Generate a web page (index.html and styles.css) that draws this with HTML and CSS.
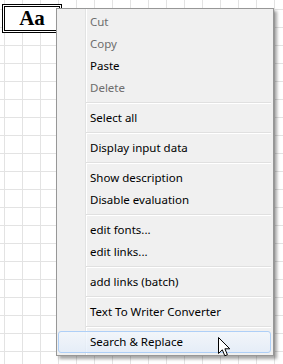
FILE: index.html
```html
<!DOCTYPE html>
<html lang="en">
<head>
    <meta charset="UTF-8">
    <meta name="viewport" content="width=device-width, initial-scale=1.0">
    <title>Context Menu</title>
    <link rel="stylesheet" href="styles.css">
</head>
<body>
    <div class="canvas">
        <div class="text-node">Aa</div>

        <ul class="menu">
            <li class="item disabled">Cut</li>
            <li class="item disabled">Copy</li>
            <li class="item">Paste</li>
            <li class="item disabled">Delete</li>
            <li class="sep"></li>
            <li class="item">Select all</li>
            <li class="sep"></li>
            <li class="item">Display input data</li>
            <li class="sep"></li>
            <li class="item">Show description</li>
            <li class="item">Disable evaluation</li>
            <li class="sep"></li>
            <li class="item">edit fonts...</li>
            <li class="item">edit links...</li>
            <li class="sep"></li>
            <li class="item">add links (batch)</li>
            <li class="sep"></li>
            <li class="item">Text To Writer Converter</li>
            <li class="sep"></li>
            <li class="item active">Search &amp; Replace</li>
        </ul>

        <svg class="cursor" width="13" height="21" viewBox="0 0 13 21">
            <path d="M0.5 0.5 L0.5 16.5 L4.3 12.8 L6.8 18.8 L9.4 17.7 L6.9 11.8 L11.8 11.8 Z" fill="#fff" stroke="#000" stroke-width="1" stroke-linejoin="miter"/>
        </svg>
    </div>
</body>
</html>
```

FILE: styles.css
```css
html, body {
    margin: 0;
    padding: 0;
}
body {
    background-color: #fff;
    background-image:
        linear-gradient(to right, #e3e3e3 1px, transparent 1px),
        linear-gradient(to bottom, #e3e3e3 1px, transparent 1px);
    background-size: 18px 18px;
    background-position: 4px 9px;
    min-height: 364px;
}
.canvas {
    position: relative;
    height: 364px;
    padding: 4px 0 0 2px;
    box-sizing: border-box;
}
.text-node {
    width: 60px;
    height: 29px;
    box-sizing: border-box;
    border: 3px double #000;
    background: #fff;
    font-family: "Liberation Serif", serif;
    font-weight: bold;
    font-size: 21px;
    line-height: 23px;
    text-align: center;
}
.menu {
    position: absolute;
    left: 56px;
    top: 8px;
    width: 218px;
    box-sizing: border-box;
    margin: 0;
    padding: 2px;
    list-style: none;
    border: 1px solid #979797;
    background-color: #f0f0f0;
    background-image: linear-gradient(to right, transparent 28px, #e2e3e3 28px, #e2e3e3 29px, #fff 29px, #fff 30px, transparent 30px);
    box-shadow: 3px 3px 3px rgba(0, 0, 0, 0.35);
    font-family: "Noto Sans", sans-serif;
    font-size: 11.5px;
    color: #000;
}
.item {
    height: 22px;
    line-height: 22px;
    padding-left: 31px;
    box-sizing: border-box;
    white-space: nowrap;
}
.disabled {
    color: #6d6d6d;
}
.sep {
    height: 8px;
    box-sizing: border-box;
    margin-left: 27px;
    padding-top: 3px;
}
.sep::before {
    content: "";
    display: block;
    height: 1px;
    background: #e0e0e0;
    border-bottom: 1px solid #fff;
}
.active {
    margin-left: -1px;
    border: 1px solid #aecff7;
    border-radius: 3px;
    line-height: 20px;
    padding-left: 31px;
    background: linear-gradient(to bottom, rgba(242, 247, 253, 0.75), rgba(226, 236, 250, 0.75));
}
.cursor {
    position: absolute;
    left: 218px;
    top: 337px;
}
```
